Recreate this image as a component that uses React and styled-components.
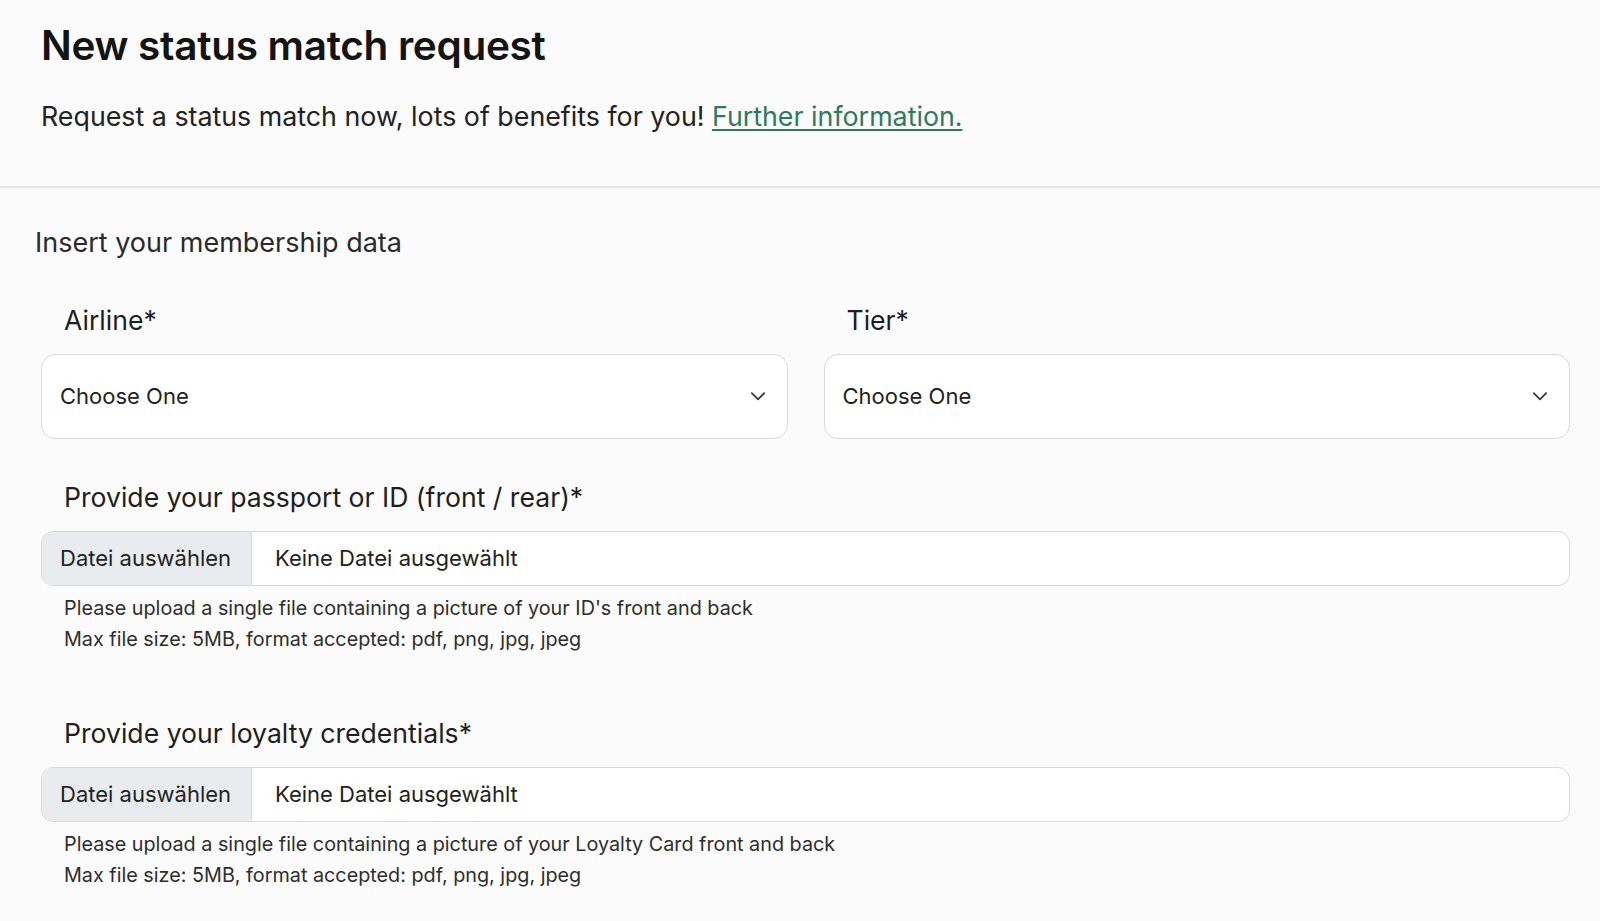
import React from 'react'
import styled, { createGlobalStyle } from "styled-components";

const GlobalStyle = createGlobalStyle`
  html, body {
    margin: 0;
    padding: 0;
    background: #fbfbfb;
  }
  body {
    font-family: Inter, "Noto Sans", "Liberation Sans", sans-serif;
    color: #212529;
  }
`;

const Chevron = () => (
    <svg width="18" height="18" viewBox="0 0 16 16" fill="none">
        <path d="M2.5 5.5 L8 11 L13.5 5.5" stroke="#343a40" strokeWidth="1.6" strokeLinecap="round" strokeLinejoin="round" />
    </svg>
)

const SelectField = ({ label }) => (
    <Field>
        <Label>{label}</Label>
        <SelectBox>
            <SelectText>Choose One</SelectText>
            <Chevron />
        </SelectBox>
    </Field>
)

const FileField = ({ label, hint }) => (
    <Field>
        <Label>{label}</Label>
        <FileBox>
            <FileButton>Datei auswählen</FileButton>
            <FileName>Keine Datei ausgewählt</FileName>
        </FileBox>
        <Hint>
            {hint}
            <br />
            Max file size: 5MB, format accepted: pdf, png, jpg, jpeg
        </Hint>
    </Field>
)

const App = () => {
    return (
        <>
            <GlobalStyle />
            <Page>
                <Header>
                    <Title>New status match request</Title>
                    <Lead>
                        Request a status match now, lots of benefits for you! <Link href="#">Further information.</Link>
                    </Lead>
                </Header>
                <Form>
                    <SectionTitle>Insert your membership data</SectionTitle>
                    <Row>
                        <SelectField label="Airline*" />
                        <SelectField label="Tier*" />
                    </Row>
                    <FileField
                        label="Provide your passport or ID (front / rear)*"
                        hint="Please upload a single file containing a picture of your ID's front and back"
                    />
                    <Spacer />
                    <FileField
                        label="Provide your loyalty credentials*"
                        hint="Please upload a single file containing a picture of your Loyalty Card front and back"
                    />
                </Form>
            </Page>
        </>
    )
}

export default App

const Page = styled.div`
  min-height: 921px;
`;

const Header = styled.header`
  padding: 22px 41px 51px;
  border-bottom: 2px solid #e6e6e6;
`;

const Title = styled.h1`
  margin: 0;
  font-size: 40.5px;
  line-height: 1.2;
  font-weight: 600;
  color: #141414;
  letter-spacing: -0.3px;
`;

const Lead = styled.p`
  margin: 26px 0 0;
  font-size: 26.8px;
  line-height: 38px;
  color: #222;
`;

const Link = styled.a`
  color: #2f7a5b;
  text-decoration: underline;
  text-underline-offset: 3px;
`;

const Form = styled.section`
  padding: 39px 30px 0 41px;
`;

const SectionTitle = styled.h2`
  margin: 0 0 47px -6px;
  font-size: 27px;
  line-height: 31px;
  font-weight: 400;
  color: #2a2a2a;
`;

const Row = styled.div`
  display: grid;
  grid-template-columns: 1fr 1fr;
  column-gap: 36px;
  margin-bottom: 43px;
`;

const Field = styled.div`
  display: flex;
  flex-direction: column;
`;

const Label = styled.label`
  padding-left: 23px;
  margin-bottom: 19px;
  font-size: 26.6px;
  line-height: 30px;
  color: #1e1e1e;
`;

const SelectBox = styled.div`
  height: 85px;
  box-sizing: border-box;
  display: flex;
  align-items: center;
  justify-content: space-between;
  padding: 0 20px 0 18px;
  background: #fff;
  border: 1.5px solid #d6dade;
  border-radius: 14px;
`;

const SelectText = styled.span`
  font-size: 22px;
  color: #222;
`;

const FileBox = styled.div`
  height: 55px;
  box-sizing: border-box;
  display: flex;
  align-items: stretch;
  background: #fff;
  border: 1.5px solid #d6dade;
  border-radius: 12px;
  overflow: hidden;
`;

const FileButton = styled.div`
  display: flex;
  align-items: center;
  padding: 0 18px;
  width: 210px;
  box-sizing: border-box;
  background: #e9ecef;
  border-right: 1.5px solid #d6dade;
  font-size: 22px;
  color: #222;
`;

const FileName = styled.div`
  display: flex;
  align-items: center;
  padding-left: 23px;
  font-size: 22px;
  color: #222;
`;

const Hint = styled.p`
  margin: 7px 0 0;
  padding-left: 23px;
  font-size: 19.8px;
  line-height: 31px;
  color: #2e2e2e;
`;

const Spacer = styled.div`
  height: 63px;
`;
